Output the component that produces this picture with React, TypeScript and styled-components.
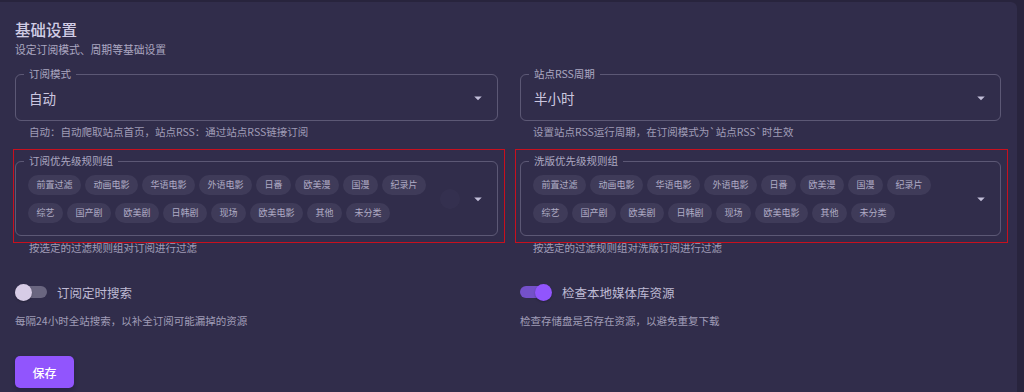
import React from "react";
import styled, { createGlobalStyle } from "styled-components";

const GlobalStyle = createGlobalStyle`
  html, body { margin: 0; padding: 0; background: #28243d; }
  body { font-family: "Noto Sans CJK SC", "Inter", sans-serif; overflow: hidden; }
  * { box-sizing: border-box; }
`;

const Card = styled.div`
  margin-top: 2px;
  width: 1017px;
  min-height: 400px;
  background: #312d4b;
  border-radius: 0 6px 6px 0;
  padding: 18px 16px 0 15px;
  color: rgba(231, 227, 252, 0.87);
`;

const Title = styled.div`
  font-size: 15.5px;
  line-height: 18px;
  font-weight: 500;
  color: rgba(231, 227, 252, 0.9);
`;

const Subtitle = styled.div`
  margin-top: 3.5px;
  font-size: 10.8px;
  line-height: 14px;
  color: rgba(231, 227, 252, 0.68);
`;

const Row = styled.div<{ $mt: number }>`
  display: grid;
  grid-template-columns: 483px 481px;
  column-gap: 22px;
  margin-top: ${(p) => p.$mt}px;
`;

const Col = styled.div`
  display: flex;
  flex-direction: column;
`;

const Outline = styled.div<{ $h: number; $mark?: number }>`
  position: relative;
  height: ${(p) => p.$h}px;
  border: 1px solid rgba(231, 227, 252, 0.24);
  border-radius: 6px;
  display: flex;
  align-items: center;
  ${(p) =>
    p.$mark !== undefined
      ? `&::after {
    content: "";
    position: absolute;
    top: -13px;
    bottom: -8px;
    left: -${p.$mark + 1}px;
    right: -8px;
    border: 1px solid #c8101e;
    pointer-events: none;
  }`
      : ""}
`;

const FieldLabel = styled.span`
  position: absolute;
  top: -8px;
  left: 8px;
  padding: 0 5px;
  background: #312d4b;
  font-size: 10.5px;
  line-height: 14px;
  color: rgba(231, 227, 252, 0.68);
`;

const Value = styled.span`
  flex: 1;
  padding-left: 13px;
  font-size: 13.5px;
  color: rgba(231, 227, 252, 0.87);
`;

const Arrow = styled.svg`
  width: 18px;
  height: 18px;
  margin-right: 10px;
  flex: none;
  fill: rgba(231, 227, 252, 0.8);
`;

const Hint = styled.div<{ $pl?: number; $mt?: number }>`
  margin-top: ${(p) => p.$mt ?? 4}px;
  padding-left: ${(p) => p.$pl ?? 14}px;
  font-size: 10.5px;
  line-height: 14px;
  color: rgba(231, 227, 252, 0.62);
`;

const Chips = styled.div`
  flex: none;
  width: 408px;
  margin-left: 12px;
  display: flex;
  flex-wrap: wrap;
  gap: 8px 4px;
  align-content: center;
`;

const Chip = styled.span`
  height: 20px;
  padding: 0 8.5px;
  border-radius: 10px;
  background: rgba(231, 227, 252, 0.08);
  font-size: 9px;
  line-height: 20px;
  color: rgba(231, 227, 252, 0.68);
  white-space: nowrap;
`;

const ClearIcon = styled.span<{ $show: boolean }>`
  width: 20px;
  height: 20px;
  margin-left: 4px;
  border-radius: 50%;
  background: rgba(231, 227, 252, 0.025);
  visibility: ${(p) => (p.$show ? "visible" : "hidden")};
  flex: none;
`;

const Spacer = styled.span`
  flex: 1;
`;

const SwitchRow = styled.div`
  display: flex;
  align-items: center;
  height: 18px;
  gap: 9px;
`;

const SwitchBox = styled.span`
  position: relative;
  width: 33px;
  height: 18px;
  flex: none;
`;

const Track = styled.span<{ $on: boolean }>`
  position: absolute;
  left: 0;
  top: 3px;
  width: ${(p) => (p.$on ? 29 : 32)}px;
  height: 12px;
  border-radius: 6px;
  background: ${(p) => (p.$on ? "#7451c9" : "#6a6680")};
`;

const Thumb = styled.span<{ $on: boolean }>`
  position: absolute;
  top: 0.5px;
  left: ${(p) => (p.$on ? 15 : 0)}px;
  width: 17px;
  height: 17px;
  border-radius: 50%;
  background: ${(p) => (p.$on ? "#9155fd" : "#d7cce6")};
  box-shadow: 0 1px 2px rgba(0, 0, 0, 0.25);
`;

const SwitchLabel = styled.span`
  font-size: 12.5px;
  color: rgba(231, 227, 252, 0.78);
`;

const Desc = styled.div`
  margin-top: 13px;
  font-size: 10.5px;
  line-height: 14px;
  color: rgba(231, 227, 252, 0.62);
`;

const SaveButton = styled.button`
  margin-top: 28px;
  width: 59px;
  height: 32px;
  border: none;
  border-radius: 5px;
  background: #9155fd;
  color: #fff;
  font-family: inherit;
  font-size: 12px;
  font-weight: 500;
  box-shadow: 0 2px 4px rgba(20, 10, 50, 0.3);
`;

const DownArrow = () => (
  <Arrow viewBox="0 0 24 24">
    <path d="M7 10l5 5 5-5z" />
  </Arrow>
);

const Select = ({ label, value }: { label: string; value: string }) => (
  <Outline $h={47}>
    <FieldLabel>{label}</FieldLabel>
    <Value>{value}</Value>
    <DownArrow />
  </Outline>
);

const ruleGroups = [
  "前置过滤",
  "动画电影",
  "华语电影",
  "外语电影",
  "日番",
  "欧美漫",
  "国漫",
  "纪录片",
  "综艺",
  "国产剧",
  "欧美剧",
  "日韩剧",
  "现场",
  "欧美电影",
  "其他",
  "未分类",
];

const ChipSelect = ({
  label,
  clearable,
  mark,
}: {
  label: string;
  clearable: boolean;
  mark: number;
}) => (
  <Outline $h={75} $mark={mark}>
    <FieldLabel>{label}</FieldLabel>
    <Chips>
      {ruleGroups.map((g) => (
        <Chip key={g}>{g}</Chip>
      ))}
    </Chips>
    <ClearIcon $show={clearable} />
    <Spacer />
    <DownArrow />
  </Outline>
);

const Switch = ({ on, label }: { on: boolean; label: string }) => (
  <SwitchRow>
    <SwitchBox>
      <Track $on={on} />
      <Thumb $on={on} />
    </SwitchBox>
    <SwitchLabel>{label}</SwitchLabel>
  </SwitchRow>
);

export default function App() {
  return (
    <>
      <GlobalStyle />
      <Card>
        <Title>基础设置</Title>
        <Subtitle>设定订阅模式、周期等基础设置</Subtitle>

        <Row $mt={18.5}>
          <Col>
            <Select label="订阅模式" value="自动" />
            <Hint>自动：自动爬取站点首页，站点RSS：通过站点RSS链接订阅</Hint>
          </Col>
          <Col>
            <Select label="站点RSS周期" value="半小时" />
            <Hint $pl={13}>设置站点RSS运行周期，在订阅模式为`站点RSS`时生效</Hint>
          </Col>
        </Row>

        <Row $mt={22}>
          <Col>
            <ChipSelect label="订阅优先级规则组" clearable mark={2} />
            <Hint $mt={5}>按选定的过滤规则组对订阅进行过滤</Hint>
          </Col>
          <Col>
            <ChipSelect label="洗版优先级规则组" clearable={false} mark={5} />
            <Hint $pl={13} $mt={5}>按选定的过滤规则组对洗版订阅进行过滤</Hint>
          </Col>
        </Row>

        <Row $mt={28}>
          <Col>
            <Switch on={false} label="订阅定时搜索" />
            <Desc>每隔24小时全站搜索，以补全订阅可能漏掉的资源</Desc>
          </Col>
          <Col>
            <Switch on label="检查本地媒体库资源" />
            <Desc>检查存储盘是否存在资源，以避免重复下载</Desc>
          </Col>
        </Row>

        <SaveButton>保存</SaveButton>
      </Card>
    </>
  );
}
